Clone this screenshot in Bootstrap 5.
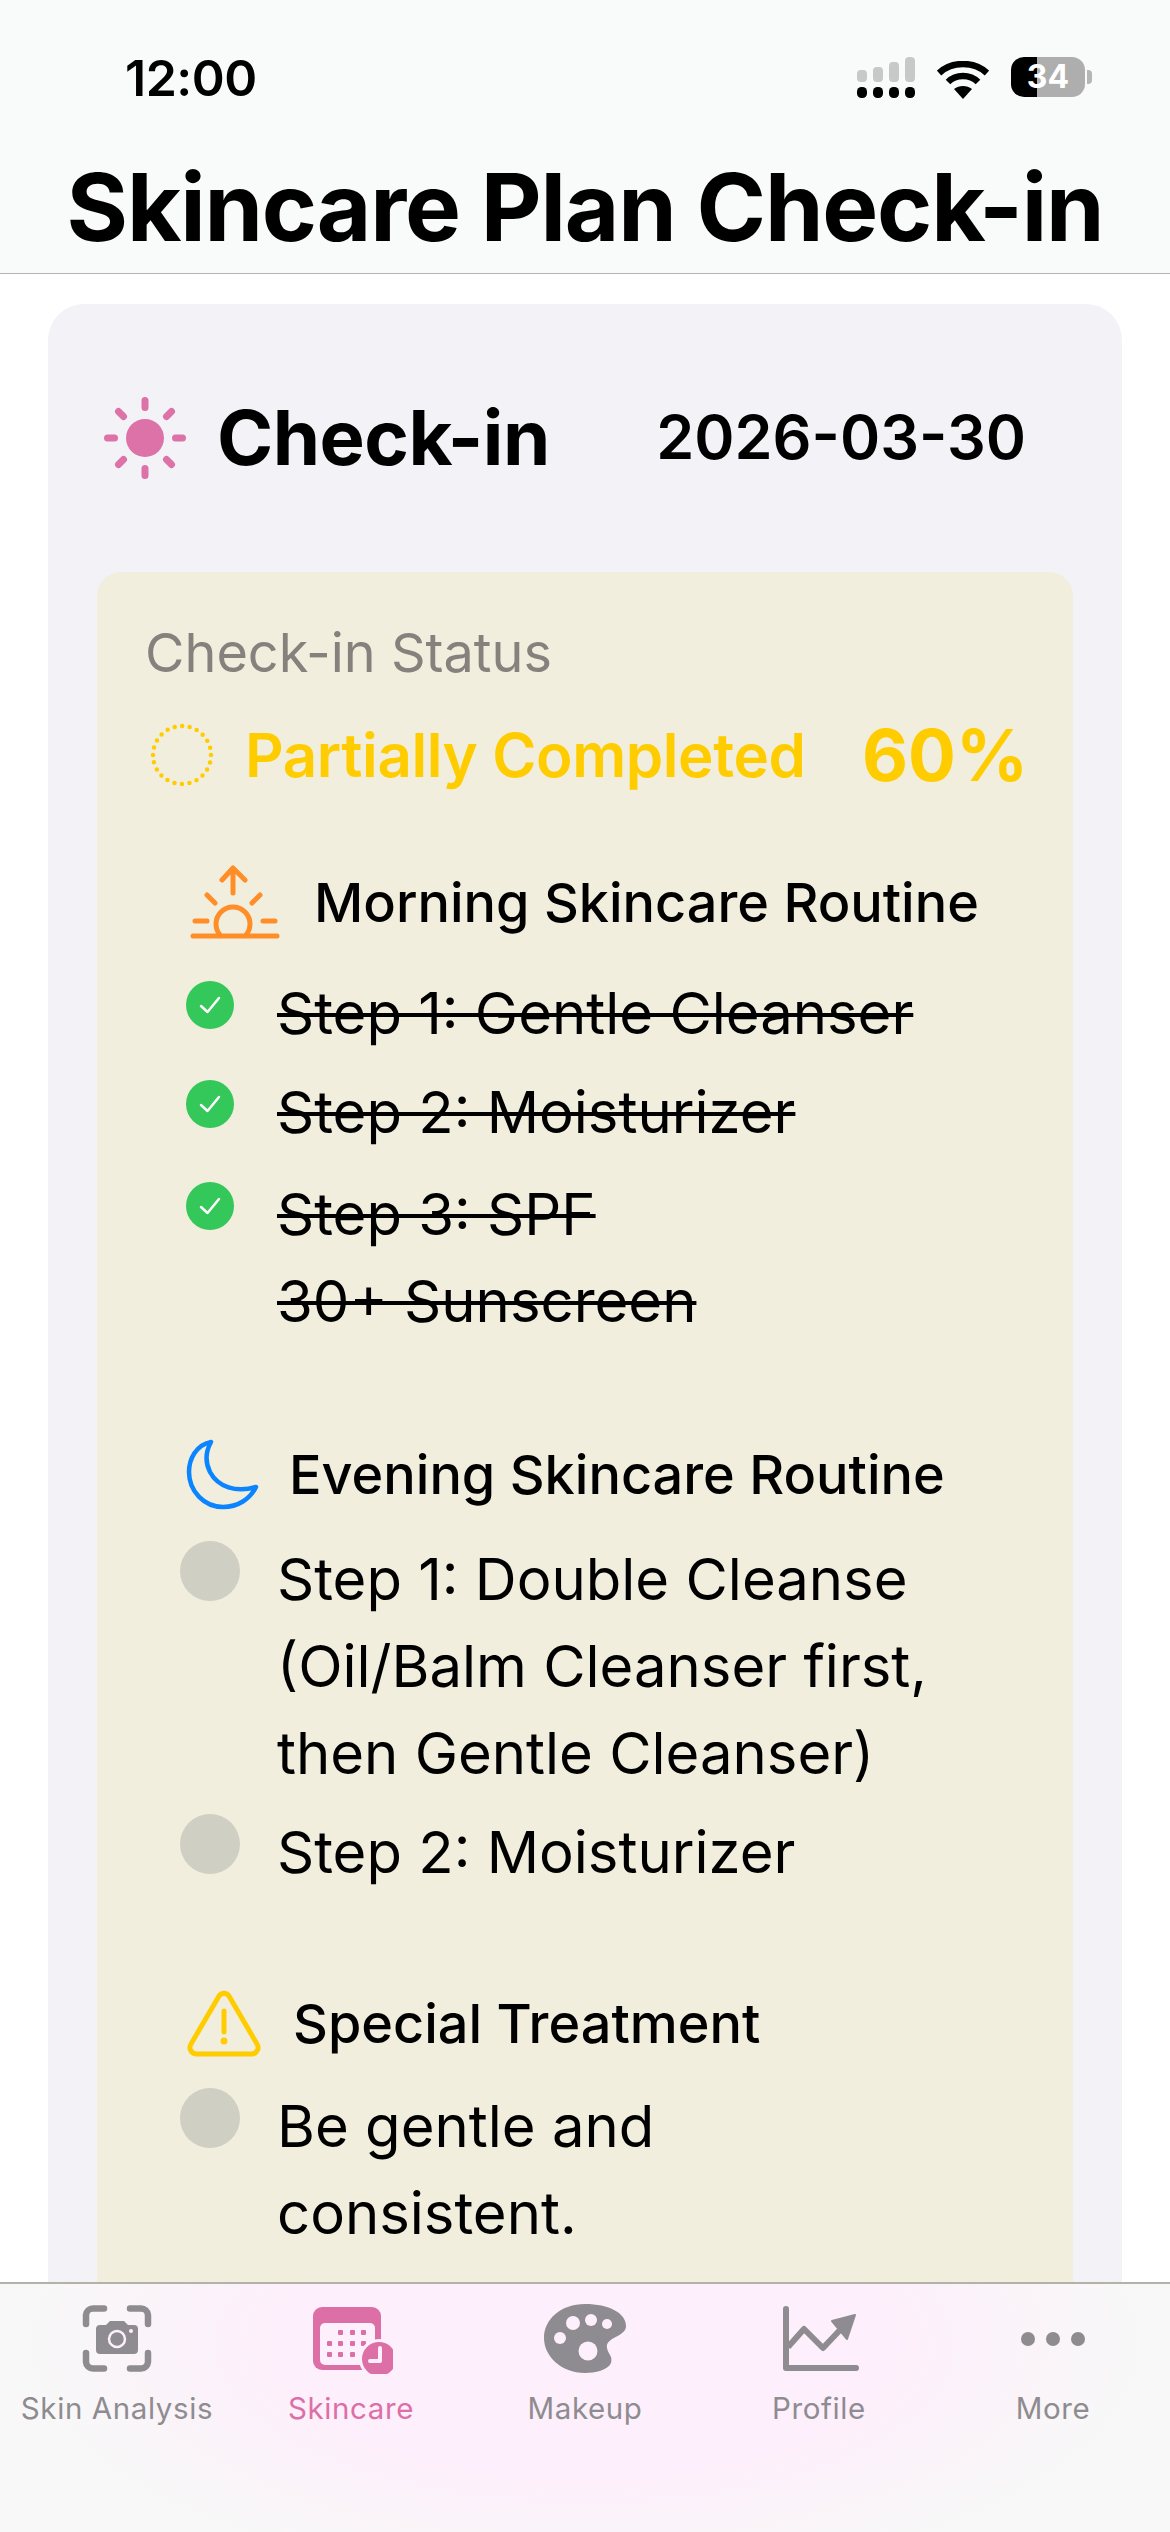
<!DOCTYPE html>
<html lang="en">
<head>
    <meta charset="UTF-8">
    <title>Skincare Plan Check-in</title>
    <link href="https://cdn.jsdelivr.net/npm/bootstrap@5.3.3/dist/css/bootstrap.min.css" rel="stylesheet">
    <style>
        html, body { height: 2532px; overflow: hidden; }
        body { font-family: Inter, "Liberation Sans", sans-serif; color: #000; background: #fff; }
        .screen { height: 2532px; }

        /* top area */
        .top-area { height: 274px; flex: none; background: #f9fafa; border-bottom: 1px solid #b5b5b5; }
        .status-bar { height: 132px; padding: 48px 78px 0 125px; }
        .clock { font-size: 50px; font-weight: 600; line-height: 60px; letter-spacing: -.5px; }
        .status-icons { gap: 22px; padding-top: 9px; }
        .batt { width: 74px; height: 40px; border-radius: 13px; font-size: 32px; font-weight: 700; line-height: 40px; color: #fff; text-align: center;
            background: linear-gradient(90deg, #000 35%, #aeaeae 35%); }
        .batt-nub { width: 5px; height: 14px; border-radius: 0 4px 4px 0; background: #b5b5b5; margin-left: 2px; }
        .page-title { font-size: 94px; font-weight: 700; line-height: 120px; margin: 15px 0 0; text-align: center; letter-spacing: -1.2px; }

        /* panel + card */
        .page-body { min-height: 0; overflow: hidden; }
        .outer-panel { margin: 30px 48px 0; padding: 84px 49px 0; background: #f2f2f7; border-radius: 36px 36px 0 0; }
        .panel-head { height: 100px; margin-bottom: 84px; padding: 0 0 0 6px; }
        .panel-title { font-size: 76px; font-weight: 700; line-height: 100px; margin: -2px 0 0 30px; letter-spacing: -.5px; }
        .panel-date { font-size: 61px; font-weight: 600; line-height: 100px; margin: -2px 47px 0 auto; }
        .status-card { background: #f1eedd; border-radius: 24px 24px 0 0; padding: 46px 48px 200px; }
        .status-label { font-size: 54px; line-height: 70px; color: #85827e; }
        .status-row { height: 80px; margin-top: 27px; padding-left: 5px; }
        .status-text { font-size: 60px; font-weight: 600; line-height: 80px; color: #ffcc00; margin-left: 31px; letter-spacing: -.4px; }
        .status-pct { font-size: 71px; font-weight: 700; line-height: 80px; color: #ffcc00; margin: 0 -3px 0 auto; }

        .routine-head { height: 80px; font-size: 54px; font-weight: 500; line-height: 80px; }
        .routine-head.am { margin: 68px 0 27px 45px; gap: 34px; }
        .routine-head.pm { margin: 90px 0 21px 41px; gap: 29px; }
        .routine-head.sp { margin: 88px 0 19px 42px; gap: 32px; }
        .step-list { margin: 0 0 0 35px; padding: 0; list-style: none; }
        .step-item { font-size: 58px; line-height: 87px; gap: 37px; margin-bottom: 12px; }
        .step-item:last-child { margin-bottom: 0; }
        .step-item.step-low { margin-top: 15px; }
        .step-mark { width: 60px; flex: none; }
        .step-done { text-decoration: line-through; text-decoration-thickness: 4px; }
        .dot-open { display: block; width: 60px; height: 60px; margin-top: 5px; border-radius: 50%; background: #d0cfc4; }
        .dot-done { display: block; margin: 11px auto 0; }

        /* tabs */
        .tab-strip { height: 250px; flex: none; border-top: 2px solid #b3b1a8;
            background: radial-gradient(ellipse 560px 240px at 50% 60px, #fdeffb 55%, #f8f8f8 100%); }
        .tab-cell { width: 234px; padding-top: 20px; color: #8e8c90; font-size: 29.5px; line-height: 40px; letter-spacing: .6px; text-align: center; }
        .tab-cell svg { display: block; margin: 0 auto 14px; }
        .tab-cell.on { color: #dc6fa6; }
    </style>
</head>
<body>
<div class="screen d-flex flex-column">

    <header class="top-area">
        <div class="status-bar d-flex justify-content-between">
            <div class="clock">12:00</div>
            <div class="status-icons d-flex align-items-start">
                <svg width="58" height="41" viewBox="0 0 58 41">
                    <g fill="#c8c8c8">
                        <rect x="0" y="13" width="10" height="12" rx="4"/>
                        <rect x="16" y="10" width="10" height="15" rx="4"/>
                        <rect x="32" y="5" width="10" height="20" rx="4"/>
                        <rect x="48" y="0" width="10" height="25" rx="4"/>
                    </g>
                    <g fill="#000">
                        <rect x="0" y="30" width="10" height="11" rx="4.5"/>
                        <rect x="16" y="30" width="10" height="11" rx="4.5"/>
                        <rect x="32" y="30" width="10" height="11" rx="4.5"/>
                        <rect x="48" y="30" width="10" height="11" rx="4.5"/>
                    </g>
                </svg>
                <svg width="52" height="38" viewBox="0 0 52 38" class="mt-1">
                    <path d="M2 12 C15 0 37 0 50 12 M11 21 C19 13 33 13 41 21" fill="none" stroke="#000" stroke-width="6.5"/>
                    <path d="M17 28 C22 24 30 24 35 28 L26 38Z" fill="#000"/>
                </svg>
                <div class="d-flex align-items-center">
                    <div class="batt">34</div>
                    <div class="batt-nub"></div>
                </div>
            </div>
        </div>
        <h1 class="page-title">Skincare Plan Check-in</h1>
    </header>

    <main class="page-body flex-grow-1">
        <div class="outer-panel">
            <div class="panel-head d-flex align-items-center">
                <svg width="84" height="84" viewBox="0 0 84 84">
                    <circle cx="42" cy="42" r="19" fill="#dd72a8"/>
                    <path d="M42 4.500V11.500M42 72.500V79.500M4.500 42H11.500M72.500 42H79.500M15.500 15.500L20.500 20.500M68.500 15.500L63.500 20.500M15.500 68.500L20.500 63.500M68.500 68.500L63.500 63.500" stroke="#dd72a8" stroke-width="7" stroke-linecap="round"/>
                </svg>
                <h2 class="panel-title">Check-in</h2>
                <div class="panel-date">2026-03-30</div>
            </div>

            <section class="status-card">
                <div class="status-label">Check-in Status</div>
                <div class="status-row d-flex align-items-center">
                    <svg width="64" height="64" viewBox="0 0 64 64">
                        <circle cx="32" cy="32" r="29" fill="none" stroke="#ffcc00" stroke-width="4.5" stroke-linecap="round" stroke-dasharray="0 7.59"/>
                    </svg>
                    <div class="status-text">Partially Completed</div>
                    <div class="status-pct">60%</div>
                </div>

                <div class="routine-head am d-flex align-items-center">
                    <svg width="90" height="76" viewBox="0 0 90 76" fill="none" stroke="#ff8d28" stroke-width="5" stroke-linecap="round" stroke-linejoin="round">
                        <path d="M3 71H87M31 71A17 17 0 1 1 55 71M5 56H17M73 56H85M17 30L25 38M70 30L62 38M43 28V3M32 15L43 3L55 15"/>
                    </svg>
                    <span>Morning Skincare Routine</span>
                </div>
                <ul class="step-list">
                    <li class="step-item d-flex">
                        <div class="step-mark"><svg class="dot-done" width="48" height="48" viewBox="0 0 48 48"><circle cx="24" cy="24" r="24" fill="#34c759"/><path d="M15 25L21.500 31L33 17" fill="none" stroke="#fff" stroke-width="2.500" stroke-linecap="round" stroke-linejoin="round"/></svg></div>
                        <div class="step-done">Step 1: Gentle Cleanser</div>
                    </li>
                    <li class="step-item d-flex">
                        <div class="step-mark"><svg class="dot-done" width="48" height="48" viewBox="0 0 48 48"><circle cx="24" cy="24" r="24" fill="#34c759"/><path d="M15 25L21.500 31L33 17" fill="none" stroke="#fff" stroke-width="2.500" stroke-linecap="round" stroke-linejoin="round"/></svg></div>
                        <div class="step-done">Step 2: Moisturizer</div>
                    </li>
                    <li class="step-item step-low d-flex">
                        <div class="step-mark"><svg class="dot-done" width="48" height="48" viewBox="0 0 48 48"><circle cx="24" cy="24" r="24" fill="#34c759"/><path d="M15 25L21.500 31L33 17" fill="none" stroke="#fff" stroke-width="2.500" stroke-linecap="round" stroke-linejoin="round"/></svg></div>
                        <div class="step-done">Step 3: SPF<br>30+ Sunscreen</div>
                    </li>
                </ul>

                <div class="routine-head pm d-flex align-items-center">
                    <svg width="74" height="72" viewBox="0 0 74 72" fill="none" stroke="#0a84ff" stroke-width="4.500" stroke-linejoin="round">
                        <path d="M25 3C10 6 3 20 3 33C3 52 18 68 37 68C52 68 64 60 70 48C50 54 32 48 24 33C19 23 20 12 25 3Z"/>
                    </svg>
                    <span>Evening Skincare Routine</span>
                </div>
                <ul class="step-list">
                    <li class="step-item d-flex">
                        <div class="step-mark"><span class="dot-open"></span></div>
                        <div>Step 1: Double Cleanse<br>(Oil/Balm Cleanser first,<br>then Gentle Cleanser)</div>
                    </li>
                    <li class="step-item d-flex">
                        <div class="step-mark"><span class="dot-open"></span></div>
                        <div>Step 2: Moisturizer</div>
                    </li>
                </ul>

                <div class="routine-head sp d-flex align-items-center">
                    <svg width="74" height="68" viewBox="0 0 74 68" fill="none" stroke="#ffcc00" stroke-width="5" stroke-linecap="round">
                        <path d="M32 6A6 6 0 0 1 42 6L70 54A6.500 6.500 0 0 1 65 64H9A6.500 6.500 0 0 1 4 54Z"/>
                        <path d="M37 21V42"/>
                        <circle cx="37" cy="51" r="2" fill="#ffcc00" stroke-width="3"/>
                    </svg>
                    <span>Special Treatment</span>
                </div>
                <ul class="step-list">
                    <li class="step-item d-flex">
                        <div class="step-mark"><span class="dot-open"></span></div>
                        <div>Be gentle and<br>consistent.</div>
                    </li>
                </ul>
            </section>
        </div>
    </main>

    <nav class="tab-strip d-flex">
        <div class="tab-cell">
            <svg width="84" height="70" viewBox="0 0 84 70">
                <path d="M11 20V11A7 7 0 0 1 18 4.500H29M55 4.500H66A7 7 0 0 1 73 11V20M11 49V58A7 7 0 0 0 18 64.500H29M55 64.500H66A7 7 0 0 0 73 58V49" fill="none" stroke="#8e8c90" stroke-width="6.500" stroke-linecap="round"/>
                <path d="M25 21H31L35 17H49L53 21H59A4 4 0 0 1 63 25V46A4 4 0 0 1 59 50H25A4 4 0 0 1 21 46V25A4 4 0 0 1 25 21Z" fill="#8e8c90"/>
                <circle cx="42" cy="35" r="8" fill="none" stroke="#fdeffb" stroke-width="2.500"/>
                <circle cx="56" cy="27" r="2" fill="#fdeffb"/>
            </svg>
            Skin Analysis
        </div>
        <div class="tab-cell on">
            <svg width="84" height="70" viewBox="0 0 84 70">
                <rect x="4" y="3" width="68" height="63" rx="9" fill="#dc6fa6"/>
                <rect x="11" y="19" width="55" height="42" rx="5" fill="#fdeffb"/>
                <g fill="#dc6fa6">
                    <rect x="29" y="26" width="5" height="5" rx="1"/><rect x="41" y="26" width="5" height="5" rx="1"/><rect x="52" y="26" width="5" height="5" rx="1"/>
                    <rect x="18" y="37" width="5" height="5" rx="1"/><rect x="29" y="37" width="5" height="5" rx="1"/><rect x="41" y="37" width="5" height="5" rx="1"/><rect x="52" y="37" width="5" height="5" rx="1"/>
                    <rect x="18" y="48" width="5" height="5" rx="1"/><rect x="29" y="48" width="5" height="5" rx="1"/><rect x="41" y="48" width="5" height="5" rx="1"/>
                </g>
                <circle cx="70" cy="55" r="20" fill="#fdeffb"/>
                <circle cx="70" cy="55" r="17" fill="#dc6fa6"/>
                <path d="M71 44V57H61" fill="none" stroke="#fdeffb" stroke-width="4" stroke-linecap="round" stroke-linejoin="round"/>
            </svg>
            Skincare
        </div>
        <div class="tab-cell">
            <svg width="84" height="70" viewBox="0 0 84 70">
                <path d="M42 0C66 0 83 9 83 22C83 33 62 33 64 44C65 50 70 52 68 59C65 66 52 69 42 69C18 69 1 52 1 34C1 15 18 0 42 0Z" fill="#8e8c90"/>
                <g fill="#fdeffb">
                    <circle cx="30" cy="19" r="7"/><circle cx="48" cy="16" r="6"/><circle cx="64" cy="20" r="5"/><circle cx="17" cy="34" r="6"/>
                    <circle cx="45" cy="47" r="9.500"/>
                </g>
            </svg>
            Makeup
        </div>
        <div class="tab-cell">
            <svg width="84" height="70" viewBox="0 0 84 70">
                <path d="M9 5V64H79" fill="none" stroke="#8e8c90" stroke-width="6" stroke-linecap="round" stroke-linejoin="round"/>
                <path d="M11 43L27 25L46 44L63 26" fill="none" stroke="#8e8c90" stroke-width="6" stroke-linejoin="round"/>
                <path d="M78 11L55 17L70 35Z" fill="#8e8c90" stroke="#8e8c90" stroke-width="2" stroke-linejoin="round"/>
            </svg>
            Profile
        </div>
        <div class="tab-cell">
            <svg width="84" height="70" viewBox="0 0 84 70">
                <circle cx="17" cy="35" r="7" fill="#8e8c90"/><circle cx="42" cy="35" r="7" fill="#8e8c90"/><circle cx="67" cy="35" r="7" fill="#8e8c90"/>
            </svg>
            More
        </div>
    </nav>
</div>
<script src="https://cdn.jsdelivr.net/npm/bootstrap@5.3.3/dist/js/bootstrap.bundle.min.js"></script>
</body>
</html>
